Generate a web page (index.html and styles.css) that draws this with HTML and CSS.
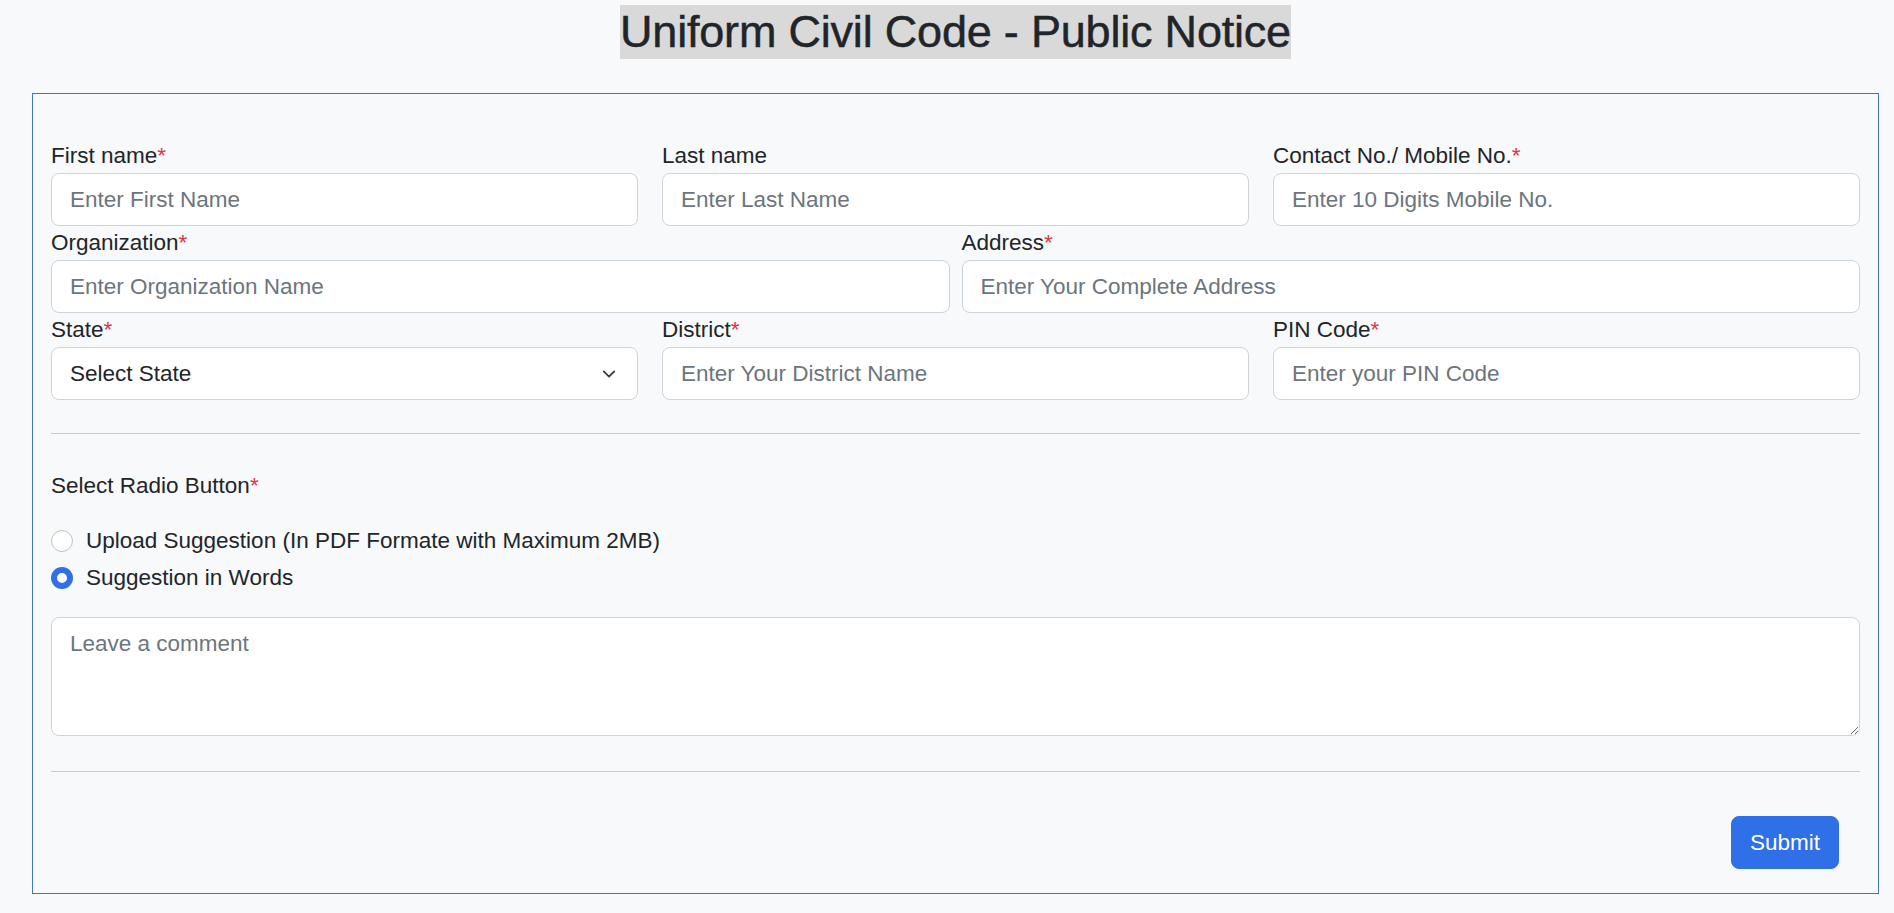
FILE: index.html
```html
<!DOCTYPE html>
<html lang="en">
<head>
    <meta charset="UTF-8">
    <meta name="viewport" content="width=device-width, initial-scale=1.0">
    <title>Uniform Civil Code - Public Notice</title>
    <link rel="stylesheet" href="styles.css">
</head>
<body>
    <div class="page">
        <h1 class="title"><span>Uniform Civil Code - Public Notice</span></h1>

        <form class="notice-form" onsubmit="return false;">
            <div class="row row-3">
                <div class="field">
                    <label for="fname">First name<span class="req">*</span></label>
                    <input type="text" id="fname" class="control" placeholder="Enter First Name">
                </div>
                <div class="field">
                    <label for="lname">Last name</label>
                    <input type="text" id="lname" class="control" placeholder="Enter Last Name">
                </div>
                <div class="field">
                    <label for="mobile">Contact No./ Mobile No.<span class="req">*</span></label>
                    <input type="text" id="mobile" class="control" placeholder="Enter 10 Digits Mobile No.">
                </div>
            </div>

            <div class="row row-2">
                <div class="field">
                    <label for="org">Organization<span class="req">*</span></label>
                    <input type="text" id="org" class="control" placeholder="Enter Organization Name">
                </div>
                <div class="field">
                    <label for="address">Address<span class="req">*</span></label>
                    <input type="text" id="address" class="control" placeholder="Enter Your Complete Address">
                </div>
            </div>

            <div class="row row-3">
                <div class="field">
                    <label for="state">State<span class="req">*</span></label>
                    <div class="select-wrap">
                        <select id="state" class="control select">
                            <option>Select State</option>
                        </select>
                        <svg class="chevron" viewBox="0 0 16 16" width="18" height="14" aria-hidden="true">
                            <path d="M2 5l6 6 6-6" fill="none" stroke="#343a40" stroke-width="2" stroke-linecap="round" stroke-linejoin="round"/>
                        </svg>
                    </div>
                </div>
                <div class="field">
                    <label for="district">District<span class="req">*</span></label>
                    <input type="text" id="district" class="control" placeholder="Enter Your District Name">
                </div>
                <div class="field">
                    <label for="pin">PIN Code<span class="req">*</span></label>
                    <input type="text" id="pin" class="control" placeholder="Enter your PIN Code">
                </div>
            </div>

            <hr class="divider first">

            <div class="radio-group">
                <p class="group-label">Select Radio Button<span class="req">*</span></p>
                <label class="check">
                    <input type="radio" name="mode" class="radio">
                    Upload Suggestion (In PDF Formate with Maximum 2MB)
                </label>
                <label class="check">
                    <input type="radio" name="mode" class="radio" checked>
                    Suggestion in Words
                </label>
            </div>

            <textarea class="control comment" placeholder="Leave a comment"></textarea>

            <hr class="divider second">

            <div class="actions">
                <button type="submit" class="btn">Submit</button>
            </div>
        </form>
    </div>
</body>
</html>
```

FILE: styles.css
```css
* { margin: 0; padding: 0; box-sizing: border-box; }
body { font-family: "Liberation Sans", Arial, sans-serif; font-size: 22.5px; line-height: 34px; background: #f8f9fa; color: #212529; }

.page { padding: 5px 15px 0 32px; }

.title { text-align: center; font-size: 45px; font-weight: 400; line-height: 54px; margin-bottom: 34px; letter-spacing: -0.2px; -webkit-text-stroke: 0.5px #212529; }
.title span { display: inline-block; background: #d9d9d9; color: #212529; }

.notice-form { border: 1px solid #3f76bf; padding: 45px 18px 24px; }

.row { display: grid; }
.row-3 { grid-template-columns: repeat(3, 1fr); column-gap: 24px; }
.row-2 { grid-template-columns: repeat(2, 1fr); column-gap: 12px; }

.field label { display: block; height: 34px; }
.req { color: #dc3545; }

.control { display: block; width: 100%; height: 53px; padding: 0 18px; font-family: inherit; font-size: 22.5px; color: #212529; background: #fff; border: 1px solid #ced4da; border-radius: 8px; outline: none; }
.control::placeholder { color: #6c757d; opacity: 1; }

.select-wrap { position: relative; }
.select { appearance: none; -webkit-appearance: none; padding-right: 54px; }
.chevron { position: absolute; right: 20px; top: 20px; pointer-events: none; }

.divider { border: 0; border-top: 1px solid #c9cacc; }
.divider.first { margin-top: 33px; }
.divider.second { margin-top: 35px; }

.radio-group { margin-top: 35px; }
.group-label { height: 34px; margin-bottom: 21px; }
.check { display: flex; align-items: center; gap: 13px; height: 34px; margin-bottom: 3px; }
.radio { appearance: none; -webkit-appearance: none; width: 22px; height: 22px; border: 1px solid #bfc1c3; border-radius: 50%; background: #fff; flex-shrink: 0; margin: 0; }
.radio:checked { border: 6px solid #2f6fe8; }

.comment { height: 119px; margin-top: 22px; padding: 9px 18px; line-height: 34px; resize: vertical; }

.actions { display: flex; justify-content: flex-end; margin-top: 44px; padding-right: 21px; }
.btn { height: 53px; padding: 0 18px; font-family: inherit; font-size: 22.5px; color: #fff; background: #2f6fe8; border: 1px solid #2f6fe8; border-radius: 8px; cursor: pointer; }
.btn:hover { background: #245fd0; }
```
